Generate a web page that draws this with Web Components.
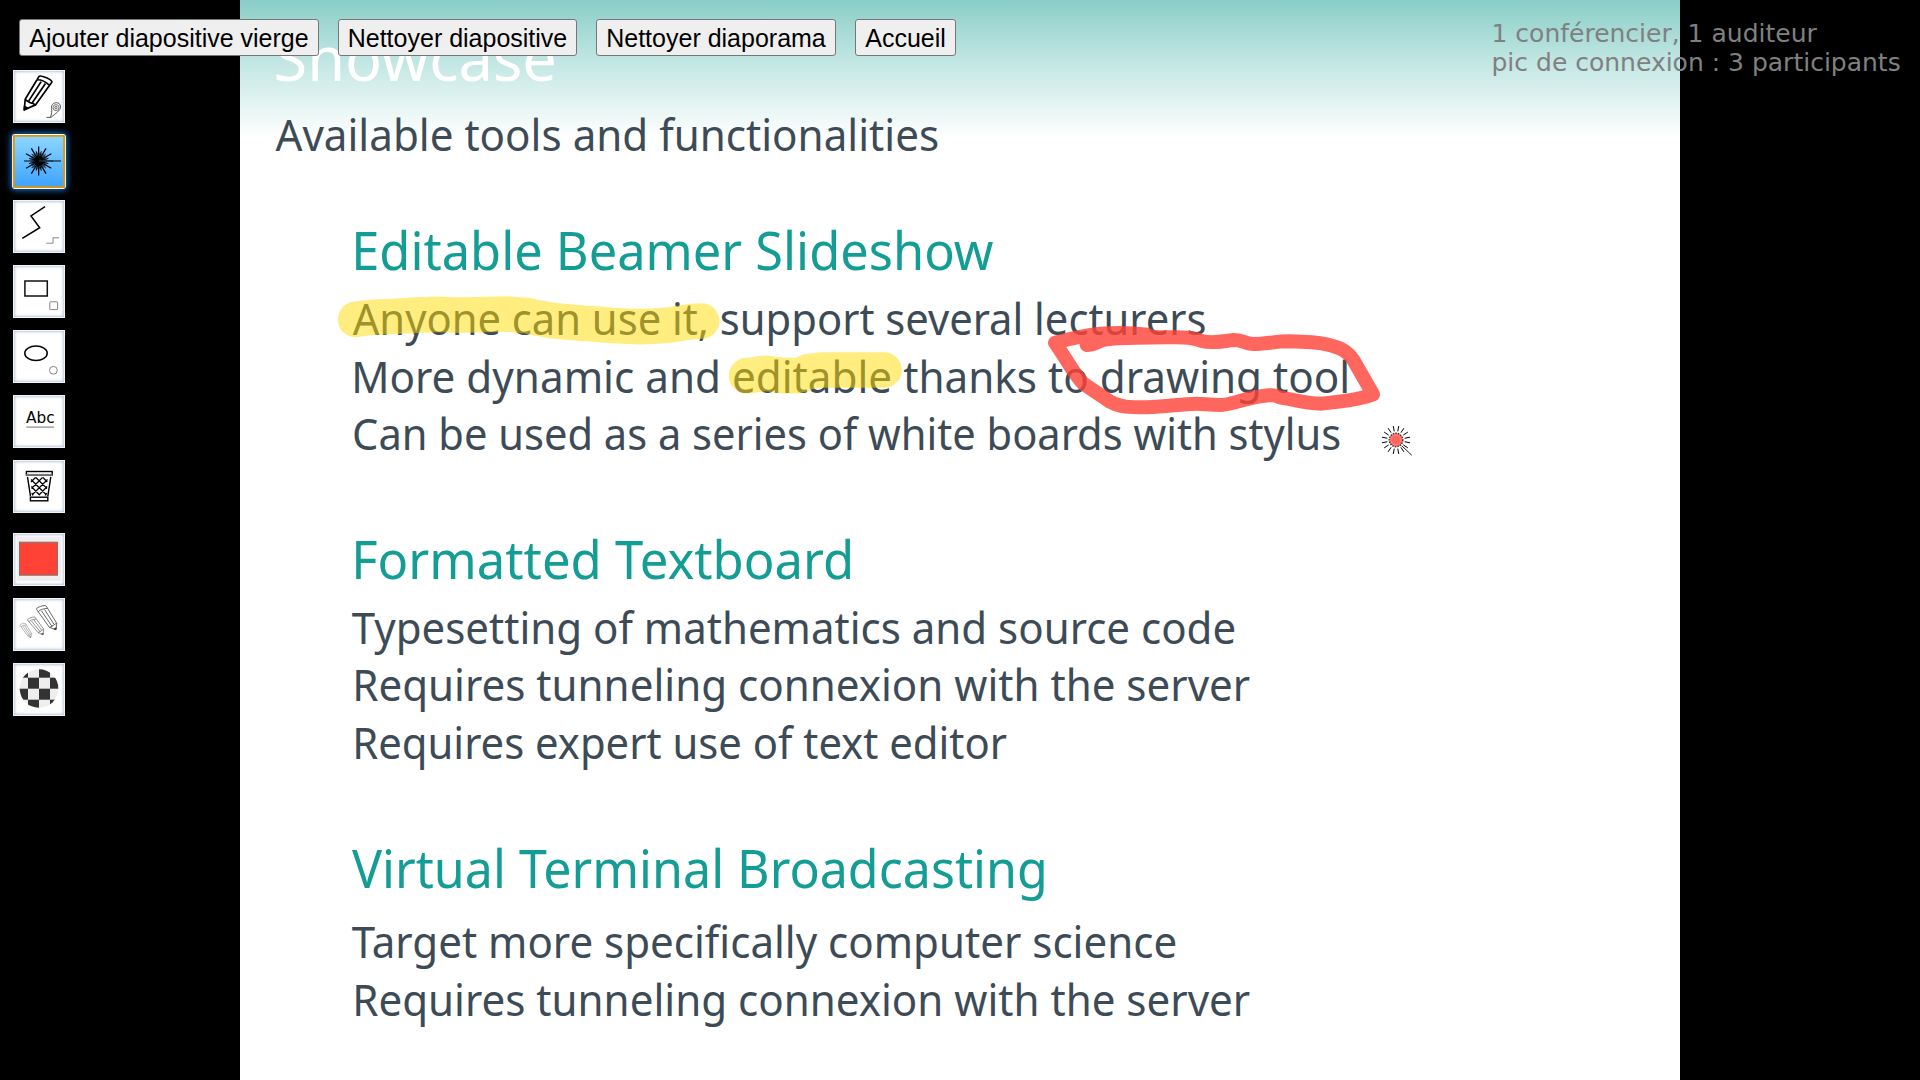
<!DOCTYPE html>
<html lang="fr">
<head>
<meta charset="utf-8">
<title>Diaporama</title>
<style>
html,body{margin:0;height:100%;background:#000;overflow:hidden}
</style>
</head>
<body>
<slide-show></slide-show>
<script>
const define=(name,html,init)=>customElements.define(name,class extends HTMLElement{
  constructor(){super();this.attachShadow({mode:'open'}).innerHTML=html;}
  connectedCallback(){if(init)init(this,this.shadowRoot);}
});

/* A line of slide text, fitted between two abscissas of the slide (from / to). */
const pen=document.createElement('canvas').getContext('2d');
define('slide-line',`<style>
:host{display:block;height:57.3px;line-height:57.3px;font-family:"Noto Sans","Open Sans",sans-serif;font-size:44.2px;color:#3d4b57;white-space:nowrap}
:host([kind=heading]){height:70px;line-height:70px;font-size:52.8px;color:#149d94}
:host([kind=title]){height:80px;line-height:80px;font-size:62px;color:#fff}
span{display:inline-block;transform-origin:0 50%}
</style><span><slot></slot></span>`,(host,root)=>{
  const cs=getComputedStyle(host);
  pen.font=cs.fontSize+' "Noto Sans","Open Sans",sans-serif';
  const m=pen.measureText(host.textContent);
  const from=+host.getAttribute('from'),to=+host.getAttribute('to');
  const k=(to-from)/(m.actualBoundingBoxLeft+m.actualBoundingBoxRight);
  root.querySelector('span').style.transform=`translateX(${from+m.actualBoundingBoxLeft*k}px) scaleX(${k})`;
});

define('slide-section',`<style>
:host{display:flex;flex-direction:column;gap:var(--gap,5.5px)}
.lines{display:flex;flex-direction:column}
</style><slot name="heading"></slot><div class="lines"><slot></slot></div>`);

define('slide-page',`<style>
:host{display:block;box-sizing:border-box;width:1440px;height:1080px;overflow:hidden;padding-top:16.5px;
background:linear-gradient(#88cec8 0,#94d2cc 11px,#bfe5e2 58px,#dff2f0 98px,#fff 138px) #fff}
.sub{margin:9px 0 52px}
.body{display:flex;flex-direction:column;gap:61.5px}
</style>
<slide-line kind="title" from="36.5" to="314">Showcase</slide-line>
<slide-line class="sub" from="35.5" to="698">Available tools and functionalities</slide-line>
<div class="body">
<slide-section><slide-line slot="heading" kind="heading" from="116" to="753">Editable Beamer Slideshow</slide-line>
<slide-line from="112.7" to="965.3">Anyone can use it, support several lecturers</slide-line>
<slide-line from="115" to="1107">More dynamic and editable thanks to drawing tool</slide-line>
<slide-line from="114" to="1100">Can be used as a series of white boards with stylus</slide-line></slide-section>
<slide-section><slide-line slot="heading" kind="heading" from="116" to="610">Formatted Textboard</slide-line>
<slide-line from="111.7" to="994.3">Typesetting of mathematics and source code</slide-line>
<slide-line from="116" to="1010">Requires tunneling connexion with the server</slide-line>
<slide-line from="116" to="766.7">Requires expert use of text editor</slide-line></slide-section>
<slide-section style="--gap:10.7px"><slide-line slot="heading" kind="heading" from="112" to="803.5">Virtual Terminal Broadcasting</slide-line>
<slide-line from="111.7" to="935.3">Target more specifically computer science</slide-line>
<slide-line from="116" to="1010">Requires tunneling connexion with the server</slide-line></slide-section>
</div>`);

/* Rays around a disc: n rays, from radius a to radius b. */
const rays=(x,y,n,a,b,w,off=0)=>{
  let d='';
  for(let i=0;i<n;i++){const t=(i+off)*2*Math.PI/n,c=Math.cos(t),s=Math.sin(t);
    d+=`M${(x+a*c).toFixed(2)} ${(y+a*s).toFixed(2)}L${(x+b*c).toFixed(2)} ${(y+b*s).toFixed(2)}`;}
  return `<path d="${d}" stroke="#000" stroke-width="${w}" fill="none" stroke-linecap="butt"/>`;
};

/* Freehand strokes and the laser pointer, over the slide. */
define('drawing-layer',`<style>:host{display:block;width:1920px;height:1080px}svg{display:block}</style>
<svg width="1920" height="1080" fill="none" stroke-linecap="round" stroke-linejoin="round">
<g stroke="#ffdc00" stroke-opacity=".5">
<path transform="translate(320 210) scale(.33333)" stroke-width="107" d="M107 328C130 324 150 321 180 321C240 320 290 314 340 313C380 313 400 316 430 315L560 312C580 312 590 316 620 317C650 322 670 331 720 334C770 338 800 342 850 344C900 348 920 350 965 350C1020 349 1050 346 1080 340C1110 335 1120 333 1145 333"/>
<path transform="translate(700 280) scale(.33333)" stroke-width="107" d="M140 287C165 287 180 280 195 280C210 280 225 284 245 287L290 287C310 284 315 277 330 274C345 274 350 270 370 270L552 270"/>
</g>
<path transform="translate(1020 280) scale(.33333)" stroke="#ff4136" stroke-opacity=".8" stroke-width="42" d="M200 195C225 198 232 181 260 178C300 172 380 173 440 172C500 170 520 174 545 183C580 192 610 183 640 180C670 180 670 190 700 192C740 192 760 184 810 184C850 185 890 187 920 193C975 205 988 222 1000 240L1059 343C1020 360 960 364 905 371C850 370 820 358 780 352C762 342 740 345 700 353C650 363 630 375 600 375C570 375 550 371 530 371C480 372 450 379 380 382C330 382 300 382 270 365L190 311C160 280 145 245 105 188C145 178 180 168 240 161C290 158 340 159 382 164C395 173 420 172 440 172"/>
<g>${rays(1396,440,16,8.8,14.2,1,.5)}
<circle cx="1396" cy="440" r="6.8" fill="#ff4136" fill-opacity=".8" stroke="#333" stroke-width="1.4" stroke-dasharray="1.4 1.2" stroke-linecap="butt"/>
<circle cx="1396" cy="440" r="5" stroke="#ff857e" stroke-width="1"/>
<path d="M1402 446L1411.5 455" stroke="#222" stroke-width="1"/></g>
</svg>`);

define('menu-button',`<style>
:host{display:block}
button{box-sizing:border-box;width:100%;height:37px;margin:0;padding:0;border:1px solid #767676;border-radius:3px;background:#efefef;color:#000;font:25px/34px "Liberation Sans",Arial,sans-serif;white-space:nowrap}
</style><button><slot></slot></button>`);

define('menu-bar',`<style>
:host{display:flex;justify-content:space-between;align-items:flex-start;box-sizing:border-box;width:1920px;padding:19px 19px 0}
nav{display:flex;gap:19px}
.status{font:25px/29px "DejaVu Sans",sans-serif;color:#808080;width:409.5px;white-space:nowrap}
</style>
<nav><menu-button style="width:300px">Ajouter diapositive vierge</menu-button><menu-button style="width:239px">Nettoyer diapositive</menu-button><menu-button style="width:240px">Nettoyer diaporama</menu-button><menu-button style="width:101px">Accueil</menu-button></nav>
<div class="status"><div>1 conférencier, 1 auditeur</div><div>pic de connexion : 3 participants</div></div>`);

/* Slanted pencil: top corners a,b, shoulders d,c and tip t. */
const pencil=(a,b,c,d,t,w,col)=>{
  const mix=(p,q,k)=>[p[0]+(q[0]-p[0])*k,p[1]+(q[1]-p[1])*k];
  const up=(p,q,k)=>[p[0]-(q[0]-p[0])*k,p[1]-(q[1]-p[1])*k];
  const a2=up(a,d,.16),b2=up(b,c,.16),a3=up(a,d,.27),b3=up(b,c,.27);
  const e=mix(a,b,.33),f=mix(a,b,.67),g=mix(d,c,.33),h=mix(d,c,.67);
  const m=mix(t,d,.32),n=mix(t,c,.32),s=mix(d,c,.5),q=mix(s,a,-.05);
  return `<g stroke="${col}" stroke-width="${w}" fill="none" stroke-linejoin="round">
<path d="M${a}L${d}L${t}L${c}L${b}M${e}L${g}M${f}L${h}M${d}Q${q} ${g}Q${q} ${h}L${c}"/>
<path d="M${a}L${a2}C${a3} ${b3} ${b2}L${b}Q${mix(e,g,-.12)} ${a}"/>
<path fill="#000" d="M${t}L${m}L${n}Z"/></g>`;
};
let checks='';
for(let r=0;r<4;r++)for(let c=0;c<4;c++)if((r+c)%2===0)checks+=`<rect x="${4+c*11}" y="${3.7+r*11}" width="11" height="11"/>`;

const icons={
pencil:pencil([24,9.8],[36.6,15.3],[22.5,34.9],[12.2,29.3],[11.3,39.8],1.7,'#000')+
 `<path d="M33.5 47.4H38C42 44 47.5 40.5 47.5 37C47.5 33.8 45.4 32.7 43.3 32.7C40 32.7 38 35.3 38.6 38.3C39 41 38.6 44.5 37.5 47" fill="none" stroke="#444" stroke-width=".9"/><circle cx="43" cy="37.6" r="3" fill="none" stroke="#555" stroke-width=".8"/><circle cx="43" cy="37.6" r="1.2" fill="none" stroke="#444" stroke-width=".8"/>`,
laser:rays(25.7,26,12,4,14.6,1.2)+rays(25.7,26,12,4,10,1,.5)+rays(25.7,26,24,4,8.4,.6,.5)+`<circle cx="25.7" cy="26" r="5"/><path d="M26 26H48" stroke="#1c3952" stroke-width="1.4"/>`,
line:`<path d="M32 6.7L18 16L26.7 27.7L9.3 38.3" fill="none" stroke="#000" stroke-width="1.5"/><path d="M33.3 43.2H40V37.8H46" fill="none" stroke="#888"/>`,
rect:`<rect x="11.9" y="16" width="22.4" height="15" fill="none" stroke="#111" stroke-width="1.5"/><rect x="36.8" y="36.8" width="7.8" height="7.8" rx=".6" fill="none" stroke="#777" stroke-width=".9"/>`,
ellipse:`<ellipse cx="23" cy="23.3" rx="11.2" ry="7.2" fill="none" stroke="#000" stroke-width="1.5"/><circle cx="40.4" cy="40.3" r="3.9" fill="none" stroke="#777" stroke-width=".9"/>`,
text:`<text x="13.1" y="28" font-family="DejaVu Sans" font-size="15.3">Abc</text><path d="M13.3 32.1H41" stroke="#888" stroke-width="1.2"/>`,
trash:`<g fill="none" stroke="#000" stroke-width="1.4"><rect x="13.4" y="11.5" width="25.8" height="3.6"/><path d="M14.5 16.8L17.5 36.3M37.8 16.8L34.8 36.3"/><rect x="17.4" y="37.2" width="17.4" height="3.6"/><path stroke-width="1.2" d="M18 22L22.5 17.5M18.5 28.5L29.5 17.5M19 35L34.5 19.5M26 35L34.2 26.5M32 35.5L34 33M34.3 22L30 17.5M34 28.5L22.8 17.5M33.5 35L18 19.5M26.5 35L18.3 26.5M20 35.5L18.8 33"/></g><path d="M13.2 14.9H39.4" stroke="#777" stroke-width="2"/>`,
colour:`<rect x="4" y="4" width="44" height="44" fill="#eee"/><rect x="6.5" y="9.2" width="38" height="33" fill="#ff4136" stroke="#777"/>`,
sizes:pencil([25.3,13.8],[34.6,10.4],[43.7,25.3],[36.3,29.3],[43,31.7],.8,'#444')+pencil([16,23.8],[23.2,20.9],[30.7,31.2],[25,34.5],[30,36.8],.7,'#666')+pencil([8,28.7],[13.4,27],[18.6,35.7],[14.7,37.8],[17.7,39.4],.6,'#888'),
opacity:`<clipPath id="disc"><circle cx="26" cy="25.5" r="19.3"/></clipPath><g clip-path="url(#disc)"><rect width="52" height="52" fill="#eee"/><g fill="#333">${checks}</g></g>`
};

define('tool-button',`<style>
:host{display:block;width:52px;height:52.6px}
div{width:100%;height:100%;box-sizing:border-box;background:#fff;box-shadow:inset 0 0 0 1px #f0f3f8,inset 0 0 3px 1.8px #b3c1d6}
svg{display:block;overflow:visible}
:host([selected]) div{background:linear-gradient(#8fd8ff,#3ba1ff);border-radius:2px;box-shadow:inset 0 0 0 1.8px #e59700,0 0 0 .9px #fff,0 0 6px 1.5px #1473d0}
</style><div></div>`,(host,root)=>{
  root.querySelector('div').innerHTML=`<svg width="52" height="52" viewBox="0 0 52 52">${icons[host.getAttribute('icon')]}</svg>`;
});

define('tool-bar',`<style>
:host{display:flex;flex-direction:column;align-items:flex-start;gap:20.7px;padding:14px 0 0 13px}
.group{display:flex;flex-direction:column;gap:12.4px}
</style>
<div class="group"><tool-button icon="pencil"></tool-button><tool-button icon="laser" selected></tool-button><tool-button icon="line"></tool-button><tool-button icon="rect"></tool-button><tool-button icon="ellipse"></tool-button><tool-button icon="text"></tool-button><tool-button icon="trash"></tool-button></div>
<div class="group"><tool-button icon="colour"></tool-button><tool-button icon="sizes"></tool-button><tool-button icon="opacity"></tool-button></div>`);

define('slide-show',`<style>
:host{display:grid;width:1920px;height:1080px;background:#000;overflow:hidden}
slide-page,drawing-layer,.controls{grid-area:1/1}
slide-page{justify-self:center;z-index:0}
drawing-layer{z-index:1}
.controls{display:flex;flex-direction:column;z-index:2}
menu-bar{height:56px}
</style>
<slide-page></slide-page><drawing-layer></drawing-layer>
<div class="controls"><menu-bar></menu-bar><tool-bar></tool-bar></div>`);
</script>
</body>
</html>
